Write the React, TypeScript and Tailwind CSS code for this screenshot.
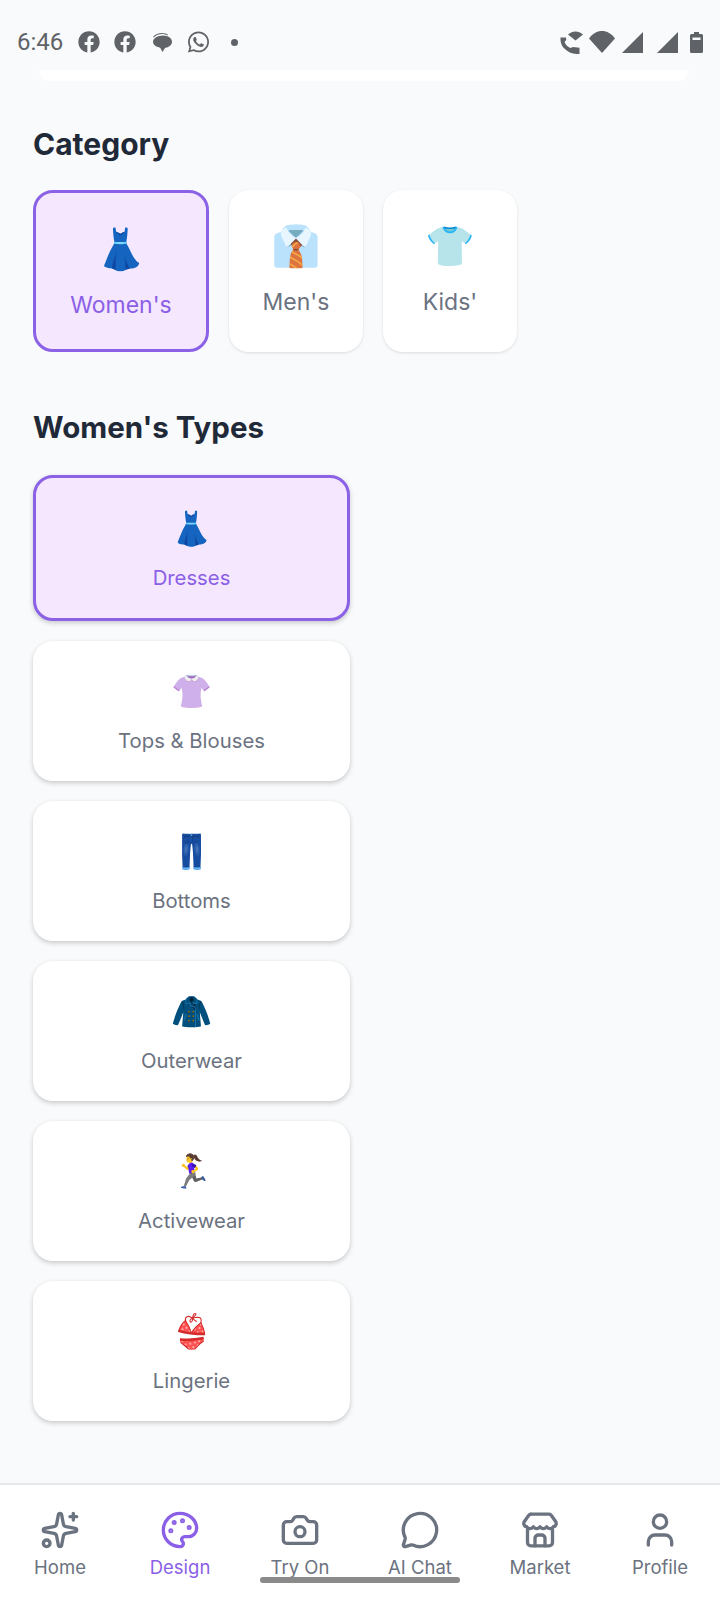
import React from 'react';
import { Sparkles, Palette, Camera, MessageCircle, User } from 'lucide-react';
import { FaFacebook, FaWhatsapp } from 'react-icons/fa';

const emojiFont = 'font-["Noto_Color_Emoji","Inter",sans-serif]';

// awning with a scalloped edge, lucide's Store is too flat for this one
const MarketIcon: React.FC<{ className?: string }> = ({ className }) => (
    <svg viewBox="0 0 24 24" fill="none" stroke="currentColor" strokeWidth={2} strokeLinecap="round" strokeLinejoin="round" className={className}>
        <path d="M6.500 2.500h11a1.500 1.500 0 0 1 1.200.6l2.600 3.600c.5.7.5 1.600.2 2.300-.3.700-.8 1-1.500 1.100" />
        <path d="M6.500 2.500a1.500 1.500 0 0 0-1.200.6L2.700 6.700c-.5.7-.5 1.600-.2 2.300.3.700.8 1 1.500 1.100" />
        <path d="M4 10.100c1.300 1.400 2.700 1.400 4 0 1.300 1.400 2.700 1.400 4 0 1.300 1.400 2.700 1.400 4 0 1.300 1.400 2.700 1.400 4 0" />
        <path d="M4.500 12v7.500a2 2 0 0 0 2 2h11a2 2 0 0 0 2-2V12" />
        <path d="M9 21.500v-4.500a2 2 0 0 1 2-2h2a2 2 0 0 1 2 2v4.500" />
    </svg>
);

const categories = [
    { label: "Women's", emoji: '👗', active: true },
    { label: "Men's", emoji: '👔', active: false },
    { label: "Kids'", emoji: '👕', active: false },
];

const types = [
    { label: 'Dresses', emoji: '👗', active: true },
    { label: 'Tops & Blouses', emoji: '👚', active: false },
    { label: 'Bottoms', emoji: '👖', active: false },
    { label: 'Outerwear', emoji: '🧥', active: false },
    { label: 'Activewear', emoji: '🏃‍♀️', active: false },
    { label: 'Lingerie', emoji: '👙', active: false },
];

const navItems = [
    { label: 'Home', icon: Sparkles },
    { label: 'Design', icon: Palette, active: true },
    { label: 'Try On', icon: Camera },
    { label: 'AI Chat', icon: MessageCircle },
    { label: 'Market', icon: MarketIcon },
    { label: 'Profile', icon: User },
];

const StatusBar = () => (
    <div className="flex h-[70px] items-center pt-[14px] text-[#5f6368]">
        <span className="ml-[17px] w-[47px] font-['Roboto',sans-serif] text-[24px] leading-none">6:46</span>
        <FaFacebook className="ml-[14px] h-[22px] w-[22px]" />
        <FaFacebook className="ml-[14px] h-[22px] w-[22px]" />
        <svg viewBox="0 0 20 19" className="ml-[16px] h-[19px] w-[20px]" fill="currentColor">
            <path d="M1 4C3 1.200 6.500 0 10 0c2.500 0 4.500.7 6 1.800l-.6.7C13.800 1.500 12 1 10 1 7 1 4 2 1.800 4.500z" />
            <path d="M11 2.500c5 0 9 2.800 9 6.300 0 3.200-3 5.700-7 6.100L10.500 19l-2.300-4.300C3.800 14 1 11.700 1 8.800c0-3.500 5-6.300 10-6.300z" />
        </svg>
        <FaWhatsapp className="ml-[15px] h-[24px] w-[23px]" />
        <span className="ml-[21px] h-[7px] w-[7px] rounded-full bg-current" />

        <svg viewBox="0 0 23 23" className="ml-auto h-[23px] w-[23px]" fill="currentColor">
            <path d="M.5 6.500h5.500c0 .5.100 1.500.3 2.500l-1.800 2c1.200 3 3.200 5 6 6.100l2.500-1.100 6.500.8v6.200c-6 .3-10.500-1-14-4.500C1.200 15 .2 11 .5 6.500z" />
            <path d="M8 3.500C12.500-.5 18.500-.5 23 3.500l-7.500 6z" />
        </svg>
        <svg viewBox="0 0 26 22" className="ml-[6px] h-[22px] w-[26px]" fill="currentColor">
            <path d="M13 22L0 7.500C3.500 2.500 8 0 13 0s9.500 2.500 13 7.500z" />
        </svg>
        <svg viewBox="0 0 21 21" className="ml-[7px] h-[21px] w-[21px]" fill="currentColor">
            <path d="M21 0v21H0z" />
        </svg>
        <svg viewBox="0 0 21 21" className="ml-[14px] h-[21px] w-[21px]" fill="currentColor">
            <path d="M21 0v21H0z" />
        </svg>
        <svg viewBox="0 0 13 21" className="mr-[17px] ml-[12px] h-[21px] w-[13px]" fill="currentColor">
            <path fillRule="evenodd" d="M4 0h5v2h2.500A1.500 1.500 0 0 1 13 3.500v16a1.500 1.500 0 0 1-1.500 1.500h-10A1.500 1.500 0 0 1 0 19.500v-16A1.500 1.500 0 0 1 1.500 2H4zM2.500 5.500V8h8V5.500z" />
        </svg>
    </div>
);

export default function App() {
    return (
        <div className="relative flex h-[1600px] w-[720px] flex-col overflow-hidden bg-[#f9fafb] font-['Inter',sans-serif]">
            <StatusBar />

            <main className="flex-1 px-[33px]">
                {/* tail of the card scrolled away above */}
                <div className="mr-[-2px] ml-[6px] h-[11px] rounded-b-[16px] bg-white" />

                <h2 className="mt-[45px] text-[30px] leading-[36px] font-bold text-[#1f2937]">Category</h2>
                <div className="mt-[28px] flex gap-[20px]">
                    {categories.map((c) => (
                        <button
                            key={c.label}
                            className={`flex flex-col items-center rounded-[20px] pt-[33px] pb-[29px] ${
                                c.active
                                    ? 'w-[176px] border-[3px] border-[#8b62e6] bg-[#f5e7fe] text-[#8b5fe6]'
                                    : 'w-[134px] bg-white text-[#6b7280] shadow-[0_1px_3px_rgba(0,0,0,0.12)]'
                            }`}
                        >
                            <span className={`flex h-[48px] items-center text-[40px] leading-none ${emojiFont}`}>{c.emoji}</span>
                            <span className="mt-[16px] text-[23px] leading-[30px]">{c.label}</span>
                        </button>
                    ))}
                </div>

                <h2 className="mt-[57px] text-[29.5px] leading-[36px] font-bold text-[#1f2937]">Women's Types</h2>
                <div className="mt-[30px] flex w-[317px] flex-col gap-[20px]">
                    {types.map((t) => (
                        <button
                            key={t.label}
                            className={`flex flex-col items-center rounded-[20px] pt-[30px] pb-[27px] shadow-[0_2px_5px_rgba(0,0,0,0.2)] ${
                                t.active
                                    ? 'border-[3px] border-[#8b62e6] bg-[#f5e7fe] text-[#8b5fe6]'
                                    : 'bg-white text-[#6b7280]'
                            }`}
                        >
                            <span className={`flex h-[40px] items-center text-[33px] leading-none ${emojiFont}`}>{t.emoji}</span>
                            <span className="mt-[17px] text-[20.3px] leading-[26px]">{t.label}</span>
                        </button>
                    ))}
                </div>
            </main>

            <nav className="grid h-[117px] grid-cols-6 border-t-2 border-[#e5e7eb] bg-white pt-[25px]">
                {navItems.map(({ label, icon: Icon, active }) => (
                    <div key={label} className={`flex flex-col items-center ${active ? 'text-[#8b5fe6]' : 'text-[#6b7280]'}`}>
                        <Icon className="h-[40px] w-[40px]" strokeWidth={2} />
                        <span className="mt-[5px] text-[18.5px] leading-[24px]">{label}</span>
                    </div>
                ))}
            </nav>

            {/* gesture pill */}
            <div className="absolute bottom-[17px] left-[260px] h-[6px] w-[200px] rounded-full bg-[#8a8a8a]" />
        </div>
    );
}
